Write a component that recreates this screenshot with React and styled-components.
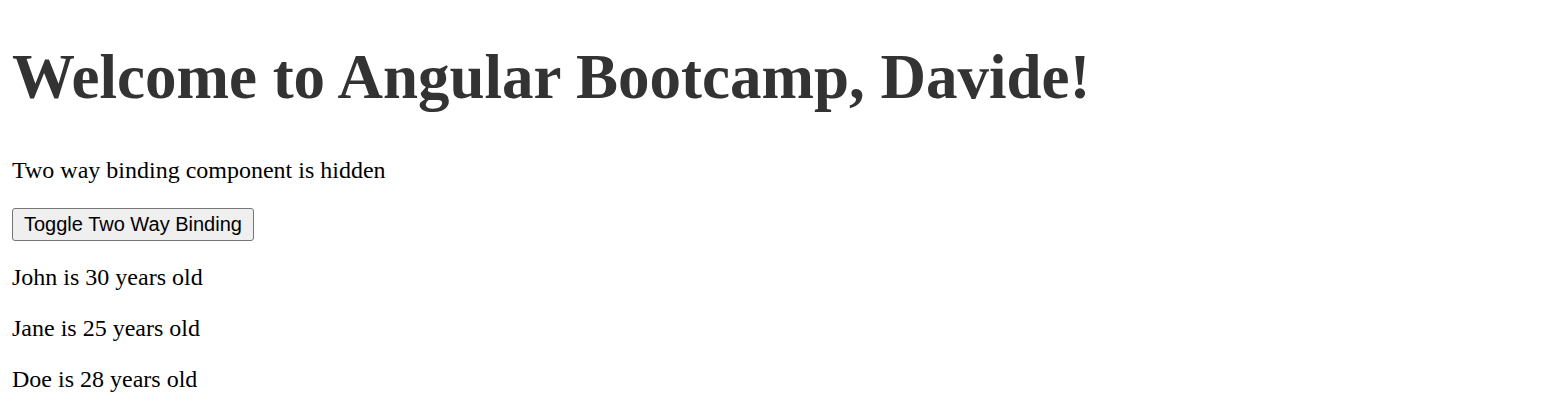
import React from "react";
import styled, { createGlobalStyle } from "styled-components";

const GlobalStyle = createGlobalStyle`
  body {
    margin: 0;
    padding: 0 12px;
    background: #fff;
    font-family: "Liberation Serif", "Times New Roman", serif;
    color: #000;
  }
`;

const Page = styled.main`
  display: flex;
  flex-direction: column;
  align-items: flex-start;
`;

const Title = styled.h1`
  margin: 41px 0 43px;
  font-size: 63px;
  font-weight: bold;
  color: #333;
`;

const Text = styled.p`
  margin: 0 0 24px;
  font-size: 24px;
`;

const ToggleButton = styled.button`
  margin: 0 0 23px;
  padding: 4px 11px;
  font-family: "Liberation Sans", Arial, sans-serif;
  font-size: 20px;
  color: #000;
  background: #efefef;
  border: 1px solid #767676;
  border-radius: 3px;
  cursor: pointer;
`;

const people = [
  { name: "John", age: 30 },
  { name: "Jane", age: 25 },
  { name: "Doe", age: 28 },
];

const App = () => {
  return (
    <>
      <GlobalStyle />
      <Page>
        <Title>Welcome to Angular Bootcamp, Davide!</Title>
        <Text>Two way binding component is hidden</Text>
        <ToggleButton>Toggle Two Way Binding</ToggleButton>
        {people.map((person) => (
          <Text key={person.name}>
            {person.name} is {person.age} years old
          </Text>
        ))}
      </Page>
    </>
  );
};

export default App;
